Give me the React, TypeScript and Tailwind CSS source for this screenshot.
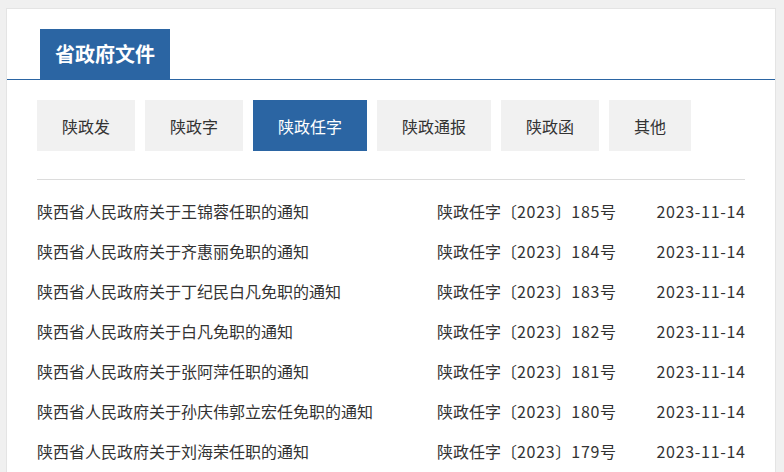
const tabs = ["陕政发", "陕政字", "陕政任字", "陕政通报", "陕政函", "其他"];

const docs = [
  { title: "陕西省人民政府关于王锦蓉任职的通知", no: "185", date: "2023-11-14" },
  { title: "陕西省人民政府关于齐惠丽免职的通知", no: "184", date: "2023-11-14" },
  { title: "陕西省人民政府关于丁纪民白凡免职的通知", no: "183", date: "2023-11-14" },
  { title: "陕西省人民政府关于白凡免职的通知", no: "182", date: "2023-11-14" },
  { title: "陕西省人民政府关于张阿萍任职的通知", no: "181", date: "2023-11-14" },
  { title: "陕西省人民政府关于孙庆伟郭立宏任免职的通知", no: "180", date: "2023-11-14" },
  { title: "陕西省人民政府关于刘海荣任职的通知", no: "179", date: "2023-11-14" },
];

export default function App() {
  const active = 2;
  return (
    <div
      className="w-[784px] h-[472px] overflow-hidden bg-[#f0f0f0] pl-[6px] pt-[8px] pr-[8px]"
      style={{ fontFamily: '"Microsoft YaHei", "Noto Sans CJK SC", sans-serif' }}
    >
      <div className="h-[600px] bg-white border border-[#e4e4e4]">
        <div className="pt-[20px] pl-[33px] border-b border-[#2b65a3]">
          <div className="w-[130px] h-[50px] bg-[#2b65a3] text-white text-[20px] font-bold flex items-center justify-center">
            省政府文件
          </div>
        </div>
        <div className="px-[30px] pt-[20px]">
          <div className="flex gap-[10px]">
            {tabs.map((t, i) => (
              <div
                key={t}
                className={
                  "h-[51px] px-[25px] flex items-center text-[16px] " +
                  (i === active ? "bg-[#2b65a3] text-white" : "bg-[#f1f1f1] text-[#333]")
                }
              >
                {t}
              </div>
            ))}
          </div>
          <div className="mt-[28px] border-t border-[#dcdcdc] pt-[11px]">
            {docs.map((d) => (
              <div key={d.no} className="h-[40px] flex items-center text-[16px] text-[#333]">
                <div className="w-[400px]">{d.title}</div>
                <div className="flex-1">
                  陕政任字〔<span className="tracking-[0.7px]">2023</span>〕<span className="tracking-[0.7px]">{d.no}</span>号
                </div>
                <div className="tracking-[0.7px] mr-[-0.7px]">{d.date}</div>
              </div>
            ))}
          </div>
        </div>
      </div>
    </div>
  );
}
